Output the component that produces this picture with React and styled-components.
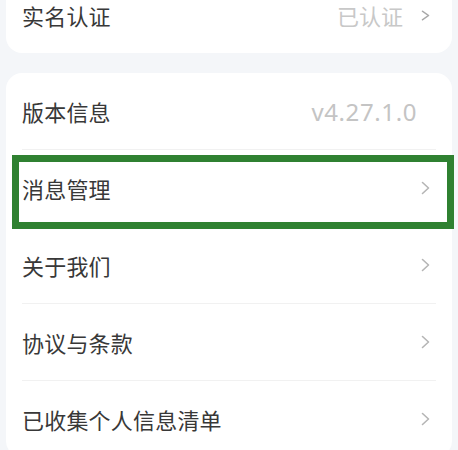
import React from "react";
import styled, { createGlobalStyle } from "styled-components";

const Global = createGlobalStyle`
  html, body { margin: 0; padding: 0; background: #f4f6f9; }
  body { font-family: "Noto Sans CJK SC", "Noto Sans", sans-serif; overflow: hidden; }
`;

const Page = styled.div`
  width: 458px;
  height: 450px;
  overflow: hidden;
  background: #f4f6f9;
`;

const Scroller = styled.div`
  margin-top: -23px;
  display: flex;
  flex-direction: column;
  gap: 20px;
  padding: 0 6px;
`;

const Card = styled.div`
  background: #ffffff;
  border-radius: 16px;
  padding: 0 16px;
`;

const Row = styled.div`
  position: relative;
  height: 76px;
  display: flex;
  align-items: center;
  justify-content: space-between;
  border-bottom: ${(p) => (p.$last ? "none" : "1px solid #f1f1f1")};
`;

const Label = styled.span`
  font-size: 22px;
  color: #383838;
  letter-spacing: 0.2px;
`;

const Right = styled.div`
  display: flex;
  align-items: center;
  gap: ${(p) => p.$gap || 18}px;
  margin-right: 6px;
`;

const Value = styled.span`
  font-size: 22px;
  color: #c8c8c8;
`;

const Version = styled.span`
  font-family: "Noto Sans", sans-serif;
  font-size: 24px;
  color: #c4c4c4;
  letter-spacing: 0.6px;
  margin-right: 19px;
`;

const Highlight = styled.div`
  position: absolute;
  left: -10px;
  right: -18px;
  top: 5px;
  height: 74px;
  box-sizing: border-box;
  border: 7px solid #2f8131;
  pointer-events: none;
`;

const Chevron = ({ color = "#b5b5b5", h = 14 }) => (
  <svg width="9" height={h} viewBox="0 0 9 14" fill="none" preserveAspectRatio="none">
    <path d="M1.5 1.5 L7.5 7 L1.5 12.5" stroke={color} strokeWidth="1.6" strokeLinecap="round" strokeLinejoin="round" />
  </svg>
);

const items = ["消息管理", "关于我们", "协议与条款", "已收集个人信息清单"];

export default function App() {
  return (
    <Page>
      <Global />
      <Scroller>
        <Card>
          <Row $last>
            <Label>实名认证</Label>
            <Right $gap={18}>
              <Value>已认证</Value>
              <Chevron color="#a8a8a8" h={11} />
            </Right>
          </Row>
        </Card>
        <Card>
          <Row>
            <Label>版本信息</Label>
            <Version>v4.27.1.0</Version>
          </Row>
          {items.map((t, i) => (
            <Row key={t} $last={i === items.length - 1}>
              <Label>{t}</Label>
              <Right>
                <Chevron />
              </Right>
              {i === 0 && <Highlight />}
            </Row>
          ))}
        </Card>
      </Scroller>
    </Page>
  );
}
